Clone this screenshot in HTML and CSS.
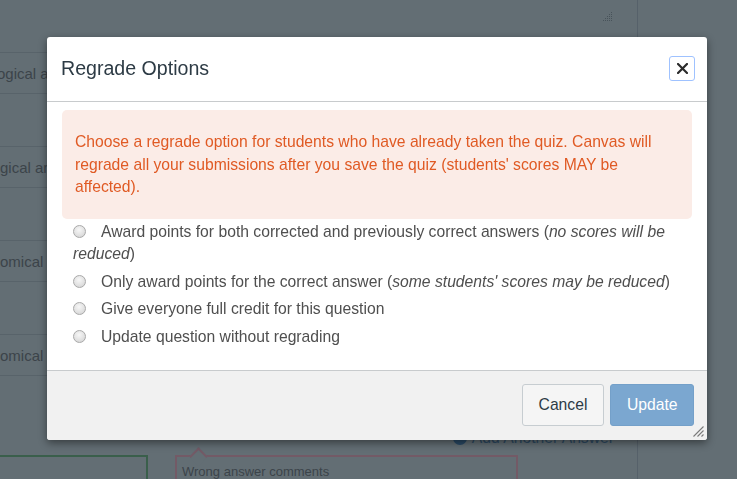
FILE: index.html
```html
<!DOCTYPE html>
<html lang="en">
<head>
<meta charset="utf-8">
<title>Regrade Options</title>
<link rel="stylesheet" href="styles.css">
</head>
<body>
<div class="page">
  <main class="content">
    <div class="top-row">
      <svg class="dots-grip" width="10" height="10" viewBox="0 0 10 10" aria-hidden="true">
        <g fill="#48535a">
          <rect x="8" y="0" width="1" height="1"/>
          <rect x="6" y="2" width="1" height="1"/><rect x="8" y="2" width="1" height="1"/>
          <rect x="4" y="4" width="1" height="1"/><rect x="6" y="4" width="1" height="1"/><rect x="8" y="4" width="1" height="1"/>
          <rect x="2" y="6" width="1" height="1"/><rect x="4" y="6" width="1" height="1"/><rect x="6" y="6" width="1" height="1"/><rect x="8" y="6" width="1" height="1"/>
          <rect x="0" y="8" width="1" height="1"/><rect x="2" y="8" width="1" height="1"/><rect x="4" y="8" width="1" height="1"/><rect x="6" y="8" width="1" height="1"/><rect x="8" y="8" width="1" height="1"/>
        </g>
      </svg>
    </div>
    <div class="answers">
      <div class="answer"><span class="answer-text shift">ogical adaptation</span></div>
      <div class="answer"><span class="answer-text">gical arrangement</span></div>
      <div class="answer"><span class="answer-text">omical adaptation</span></div>
      <div class="answer"><span class="answer-text">omical arrangement</span></div>
    </div>
    <div class="add-row">
      <span class="add-link"><span class="add-icon"></span>Add Another Answer</span>
    </div>
    <div class="comments-row">
      <div class="box-correct"></div>
      <div class="box-wrong">Wrong answer comments</div>
    </div>
  </main>
  <aside class="sidebar"></aside>
</div>

<div class="overlay">
  <div class="dialog" role="dialog" aria-labelledby="dlg-title">
    <div class="dialog-header">
      <h2 id="dlg-title" class="dialog-title">Regrade Options</h2>
      <button class="close-btn" aria-label="Close">
        <svg width="11" height="11" viewBox="0 0 11 11" aria-hidden="true">
          <path d="M1 1 L10 10 M10 1 L1 10" stroke="#2b2b2b" stroke-width="2.2" stroke-linecap="square"/>
        </svg>
      </button>
    </div>
    <div class="dialog-body">
      <div class="alert">Choose a regrade option for students who have already taken the quiz. Canvas will regrade all your submissions after you save the quiz (students' scores MAY be affected).</div>
      <label class="option"><input type="radio" name="regrade" class="radio">Award points for both corrected and previously correct answers (<em>no scores will be reduced</em>)</label>
      <label class="option"><input type="radio" name="regrade" class="radio">Only award points for the correct answer (<em>some students' scores may be reduced</em>)</label>
      <label class="option"><input type="radio" name="regrade" class="radio">Give everyone full credit for this question</label>
      <label class="option"><input type="radio" name="regrade" class="radio">Update question without regrading</label>
    </div>
    <div class="dialog-footer">
      <button class="btn btn-cancel">Cancel</button>
      <button class="btn btn-primary">Update</button>
      <svg class="resize-grip" width="12" height="12" viewBox="0 0 12 12" aria-hidden="true">
        <path d="M11.5 1.5 L1.5 11.5 M11.5 5.5 L5.5 11.5 M11.5 9.5 L9.5 11.5" stroke="#7a7a7a" stroke-width="1.1"/>
      </svg>
    </div>
  </div>
</div>
</body>
</html>
```

FILE: styles.css
```css
* { box-sizing: border-box; }

html, body {
  margin: 0;
  height: 100%;
}

body {
  background: #636e74;
  font-family: "Liberation Sans", Arial, Helvetica, sans-serif;
  color: #3c444a;
  overflow: hidden;
}

.page {
  display: grid;
  grid-template-columns: 638px 1fr;
  height: 479px;
  overflow: hidden;
}

.content {
  border-right: 1px solid #56616a;
  overflow: hidden;
}

.top-row {
  height: 52px;
  display: flex;
  justify-content: flex-end;
  padding: 12px 24px 0 0;
}

.answers {
  display: flex;
  flex-direction: column;
}

.answer {
  height: 42px;
  width: 420px;
  border-top: 1px solid #58636a;
  border-bottom: 1px solid #58636a;
  display: flex;
  align-items: center;
  font-size: 15px;
  margin-bottom: 52px;
}
.answer:last-child { margin-bottom: 0; }

.answer-text { white-space: nowrap; color: #3c444a; }
.answer-text.shift { margin-left: -3px; }

.add-row {
  display: flex;
  justify-content: flex-end;
  padding-right: 23px;
  margin-top: 51px;
  font-size: 15.7px;
  line-height: 22.5px;
}

.add-link {
  display: flex;
  align-items: center;
  gap: 5px;
  color: #2e4a62;
}

.add-icon {
  width: 14px;
  height: 14px;
  border-radius: 50%;
  background: #2a4a66;
}

.comments-row {
  display: flex;
  margin-top: 5px;
}

.box-correct {
  width: 150px;
  height: 60px;
  margin-left: -2px;
  border: 2px solid #3a5f4b;
}

.box-wrong {
  position: relative;
  margin-left: 27px;
  width: 343px;
  height: 60px;
  border: 2px solid #735a66;
  padding: 6px 5px;
  font-size: 13px;
  line-height: 18px;
  color: #3c444a;
}

.box-wrong::before {
  content: "";
  position: absolute;
  top: -7px;
  left: 15px;
  width: 11px;
  height: 11px;
  background: #636e74;
  border-top: 2px solid #735a66;
  border-left: 2px solid #735a66;
  transform: rotate(45deg);
}

/* Modal */
.overlay {
  position: fixed;
  inset: 0;
}

.dialog {
  position: absolute;
  left: 47px;
  top: 37px;
  width: 660px;
  background: #fff;
  border-radius: 3px;
  box-shadow: 0 3px 9px rgba(0, 0, 0, 0.45);
  overflow: hidden;
}

.dialog-header {
  height: 65px;
  display: flex;
  align-items: center;
  justify-content: space-between;
  padding: 0 12px 1px 14px;
  border-bottom: 1px solid #c8cbcd;
}

.dialog-title {
  margin: 0;
  font-size: 19.6px;
  font-weight: normal;
  color: #2d3b45;
}

.close-btn {
  width: 26px;
  height: 25px;
  padding: 0;
  border: 1px solid #9fc2ff;
  border-radius: 3px;
  background: #fff;
  display: flex;
  align-items: center;
  justify-content: center;
}

.dialog-body {
  padding: 8px 15px 22px;
  font-size: 15.7px;
  line-height: 22.5px;
}

.alert {
  background: #fbece7;
  color: #e05a24;
  border-radius: 5px;
  padding: 21px 14px 20px 13px;
  margin-bottom: 2px;
}

.option {
  display: block;
  margin-left: 11px;
  margin-bottom: 5px;
  color: #4f4f4f;
}
.option:last-child { margin-bottom: 0; }

.option em { font-style: italic; }

.radio {
  appearance: none;
  -webkit-appearance: none;
  width: 13px;
  height: 13px;
  margin: 0 15px 0 0;
  vertical-align: -1px;
  border: 1px solid #a9a9a9;
  border-radius: 50%;
  background: radial-gradient(circle at 45% 35%, #f7f7f7 0%, #e2e2e2 55%, #cfcfcf 100%);
}

.dialog-footer {
  position: relative;
  display: flex;
  justify-content: flex-end;
  gap: 6px;
  padding: 13px 13px 14px;
  background: #f1f1f1;
  border-top: 1px solid #c8cbcd;
}

.btn {
  height: 42px;
  font-family: "Liberation Sans", Arial, Helvetica, sans-serif;
  font-size: 15.7px;
  border-radius: 3px;
  padding: 0 16px;
}

.btn-cancel {
  background: #f5f5f5;
  border: 1px solid #c7cdd1;
  color: #2d3b45;
}

.btn-primary {
  background: #7ba7d0;
  border: 1px solid #74a0c9;
  color: #fff;
  padding: 0 15.5px;
}

.resize-grip {
  position: absolute;
  right: 3px;
  bottom: 3px;
}
```
